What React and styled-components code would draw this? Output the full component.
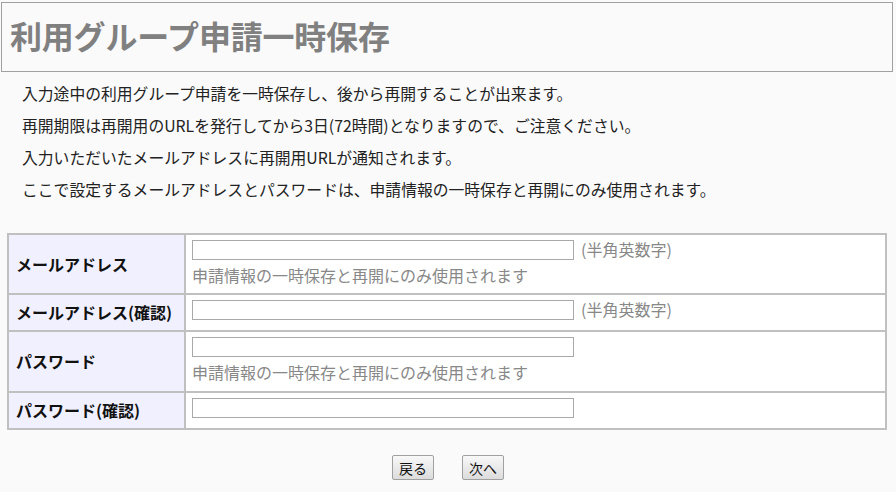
import React from "react";
import styled, { createGlobalStyle } from "styled-components";

const Global = createGlobalStyle`
  html, body { margin: 0; padding: 0; background: #fafafa; }
  body { font-family: "Noto Sans CJK JP", "Noto Sans", sans-serif; color: #222; }
`;

const Header = styled.div`
  margin: 2px 3px 0 1px;
  height: 68px;
  border: 1px solid #a0a0a0;
  background: #fafafa;
  display: flex;
  align-items: center;
  padding-left: 8px;
`;

const Title = styled.h1`
  margin: 0 0 4px 0;
  font-size: 32px;
  line-height: 40px;
  font-weight: bold;
  color: #808080;
  letter-spacing: -0.2px;
`;

const Intro = styled.div`
  margin: 6px 0 0 22px;
  font-size: 15.8px;
  line-height: 32px;
  color: #222;
`;

const Line = styled.p`
  margin: 0;
`;

const FormTable = styled.table`
  margin: 27px 0 0 7px;
  width: 880px;
  border-collapse: separate;
  border-spacing: 2px;
  background: #c0c0c0;
`;

const Label = styled.th`
  width: 168px;
  background: #f0f0ff;
  text-align: left;
  vertical-align: middle;
  font-size: 16px;
  font-weight: bold;
  color: #111;
  padding: 0 0 0 7px;
  line-height: 23px;
  height: ${(p) => p.$h}px;
`;

const Field = styled.td`
  background: #fff;
  padding: 6px 6px;
  vertical-align: top;
  line-height: 23px;
  font-size: 16px;
`;

const InputRow = styled.div`
  display: flex;
  align-items: center;
  height: 23px;
  margin-top: -3px;
`;

const TextInput = styled.input`
  box-sizing: border-box;
  width: 382px;
  height: 20px;
  border: 1px solid #a9a9a9;
  background: #fff;
  margin: 0;
  padding: 0 2px;
`;

const Note = styled.span`
  color: #888;
  margin-left: 7px;
  font-size: 16px;
`;

const Hint = styled.div`
  color: #888;
  font-size: 16px;
  line-height: 23px;
  margin-top: 3px;
`;

const Buttons = styled.div`
  display: flex;
  justify-content: center;
  gap: 28px;
  margin-top: 25px;
`;

const Button = styled.button`
  height: 25px;
  padding: 0 6px;
  font-family: "Noto Sans CJK JP", sans-serif;
  font-size: 14px;
  color: #111;
  border: 1px solid #a0a0a0;
  border-radius: 2px;
  background: linear-gradient(#f8f8f8, #dcdcdc);
  line-height: 22px;
`;

const rows = [
  { label: "メールアドレス", note: "(半角英数字)", hint: true, h: 58, type: "text" },
  { label: "メールアドレス(確認)", note: "(半角英数字)", hint: false, h: 35, type: "text" },
  { label: "パスワード", hint: true, h: 59, type: "password" },
  { label: "パスワード(確認)", hint: false, h: 35, type: "password" },
];

export default function App() {
  return (
    <>
      <Global />
      <Header>
        <Title>利用グループ申請一時保存</Title>
      </Header>
      <Intro>
        <Line>入力途中の利用グループ申請を一時保存し、後から再開することが出来ます。</Line>
        <Line>再開期限は再開用のURLを発行してから3日(72時間)となりますので、ご注意ください。</Line>
        <Line>入力いただいたメールアドレスに再開用URLが通知されます。</Line>
        <Line>ここで設定するメールアドレスとパスワードは、申請情報の一時保存と再開にのみ使用されます。</Line>
      </Intro>
      <FormTable>
        <tbody>
          {rows.map((r) => (
            <tr key={r.label}>
              <Label $h={r.h}>{r.label}</Label>
              <Field>
                <InputRow>
                  <TextInput type={r.type} />
                  {r.note && <Note>{r.note}</Note>}
                </InputRow>
                {r.hint && <Hint>申請情報の一時保存と再開にのみ使用されます</Hint>}
              </Field>
            </tr>
          ))}
        </tbody>
      </FormTable>
      <Buttons>
        <Button>戻る</Button>
        <Button>次へ</Button>
      </Buttons>
    </>
  );
}
